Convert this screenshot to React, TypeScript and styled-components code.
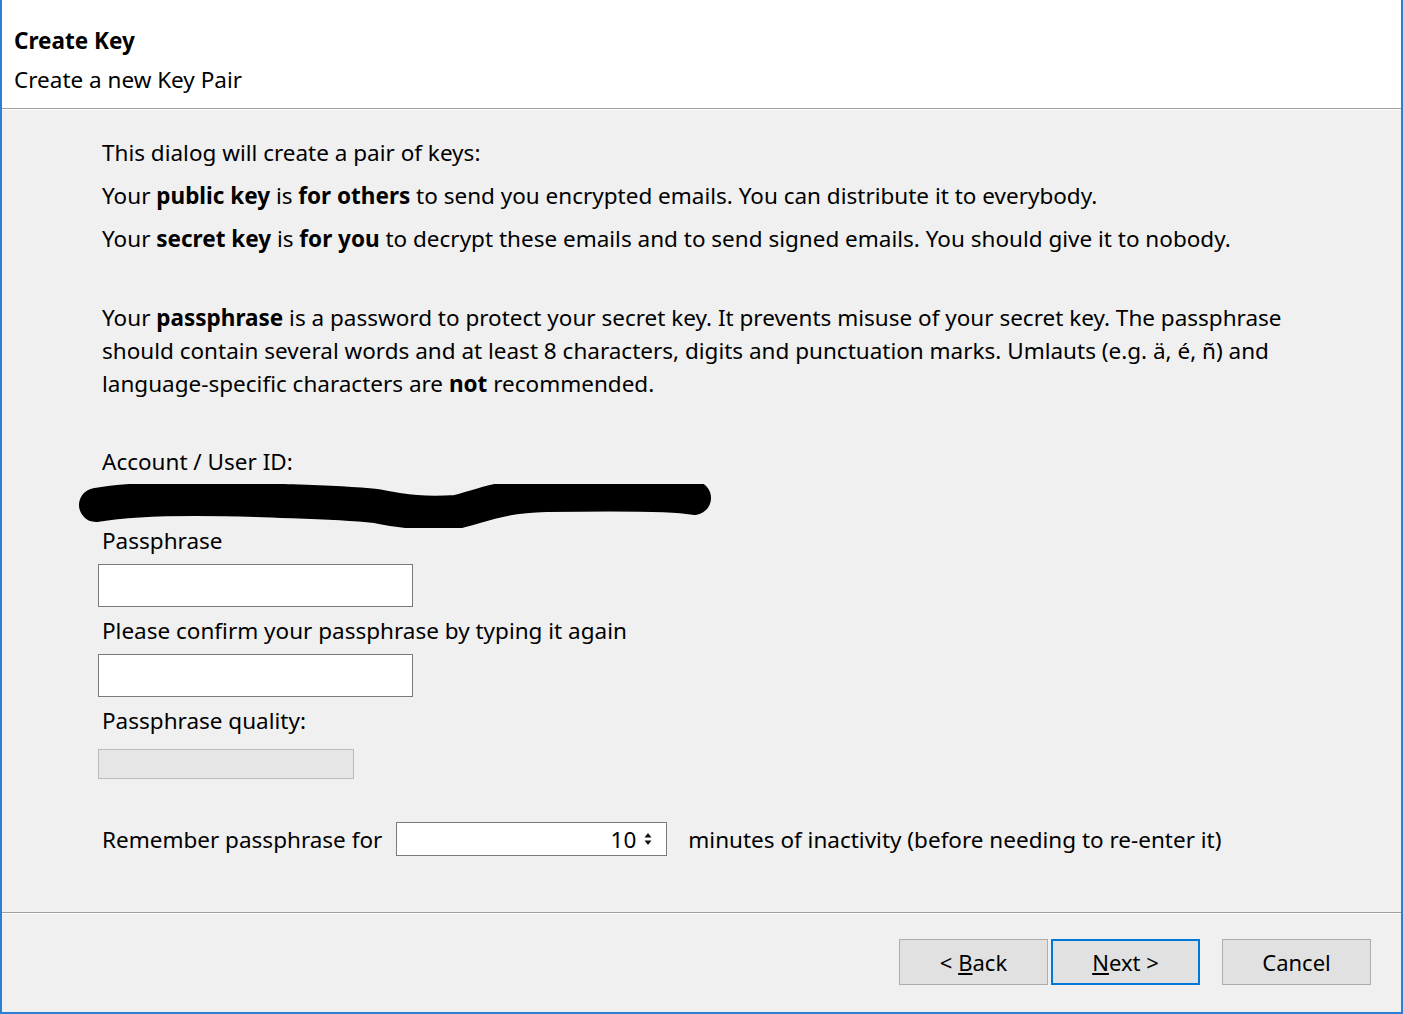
import styled, { createGlobalStyle } from 'styled-components';

const GlobalStyle = createGlobalStyle`
  html, body {
    margin: 0;
    padding: 0;
    background: #f0f0f0;
  }
  body {
    font-family: "Noto Sans", "Open Sans", sans-serif;
    color: #000;
  }
`;

const App = () => {
  return (
    <>
      <GlobalStyle />
      <Window>
        <Header>
          <Title>Create Key</Title>
          <Subtitle>Create a new Key Pair</Subtitle>
        </Header>
        <Body>
          <Line>This dialog will create a pair of keys:</Line>
          <Line>
            Your <b>public key</b> is <b>for others</b> to send you encrypted emails. You can distribute it to everybody.
          </Line>
          <Line>
            Your <b>secret key</b> is <b>for you</b> to decrypt these emails and to send signed emails. You should give it to nobody.
          </Line>
          <Paragraph>
            Your <b>passphrase</b> is a password to protect your secret key. It prevents misuse of your secret key. The passphrase
            <br />
            should contain several words and at least 8 characters, digits and punctuation marks. Umlauts (e.g. ä, é, ñ) and
            <br />
            language-specific characters are <b>not</b> recommended.
          </Paragraph>
          <Label $top={45}>Account / User ID:</Label>
          <Redacted viewBox="0 0 640 44" preserveAspectRatio="none">
            <path
              d="M20 21 C 60 14, 120 14, 180 16 C 230 18, 260 18, 300 22 C 330 28, 350 30, 380 28 C 405 22, 425 12, 470 11 C 540 10, 600 10, 618 14"
              stroke="#000"
              strokeWidth="34"
              strokeLinecap="round"
              fill="none"
            />
          </Redacted>
          <Label $top={-4}>Passphrase</Label>
          <TextField type="password" />
          <Label $top={7}>Please confirm your passphrase by typing it again</Label>
          <TextField type="password" />
          <Label $top={7}>Passphrase quality:</Label>
          <QualityBar />
          <RememberRow>
            <span>Remember passphrase for</span>
            <SpinBox>
              <SpinValue>10</SpinValue>
              <SpinArrows>
                <svg width="8" height="14" viewBox="0 0 8 14">
                  <path d="M4 1 L7.5 5.5 L0.5 5.5 Z" fill="#111" />
                  <path d="M0.5 8.5 L7.5 8.5 L4 13 Z" fill="#111" />
                </svg>
              </SpinArrows>
            </SpinBox>
            <span>minutes of inactivity (before needing to re-enter it)</span>
          </RememberRow>
        </Body>
        <Footer>
          <Button>
            &lt; <u>B</u>ack
          </Button>
          <Button $primary>
            <u>N</u>ext &gt;
          </Button>
          <Button $gap>Cancel</Button>
        </Footer>
      </Window>
    </>
  );
};

export default App;

const Window = styled.div`
  box-sizing: border-box;
  width: 1403px;
  height: 1014px;
  display: flex;
  flex-direction: column;
  border-left: 2px solid #2b7fd4;
  border-right: 2px solid #2b7fd4;
  border-bottom: 2px solid #2b7fd4;
  background: #f0f0f0;
`;

const Header = styled.div`
  height: 109px;
  flex-shrink: 0;
  box-sizing: border-box;
  background: #fff;
  padding: 24px 0 0 12px;
  border-bottom: 1px solid #a0a0a0;
  box-shadow: 0 1px 0 #fff;
`;

const Title = styled.div`
  font-size: 22.5px;
  font-weight: 700;
  line-height: 34px;
`;

const Subtitle = styled.div`
  font-size: 22.5px;
  line-height: 44px;
`;

const Body = styled.div`
  flex: 1;
  padding: 22px 0 0 100px;
  font-size: 22.5px;
  display: flex;
  flex-direction: column;
  align-items: flex-start;
`;

const Line = styled.div`
  line-height: 43px;
  white-space: nowrap;
`;

const Paragraph = styled.div`
  margin-top: 41px;
  line-height: 33px;
  white-space: nowrap;
`;

const Label = styled.div<{ $top: number }>`
  margin-top: ${(p) => p.$top}px;
  line-height: 33px;
`;

const Redacted = styled.svg`
  width: 640px;
  height: 44px;
  margin-left: -26px;
  margin-top: 6px;
  display: block;
`;

const TextField = styled.input`
  box-sizing: border-box;
  width: 315px;
  height: 43px;
  margin: 7px 0 0 -4px;
  border: 1px solid #7a7a7a;
  background: #fff;
  outline: none;
`;

const QualityBar = styled.div`
  box-sizing: border-box;
  width: 256px;
  height: 30px;
  margin: 12px 0 0 -4px;
  border: 1px solid #bcbcbc;
  background: #e6e6e6;
`;

const RememberRow = styled.div`
  display: flex;
  align-items: center;
  margin-top: 43px;
  line-height: 33px;
  white-space: nowrap;

  & > span:first-child {
    margin-right: 14px;
  }

  & > span:last-child {
    margin-left: 21px;
  }
`;

const SpinBox = styled.div`
  box-sizing: border-box;
  width: 271px;
  height: 34px;
  border: 1px solid #7a7a7a;
  background: #fff;
  display: flex;
  align-items: center;
  justify-content: flex-end;
  padding-right: 14px;
  gap: 8px;
`;

const SpinValue = styled.span`
  font-size: 22.5px;
`;

const SpinArrows = styled.span`
  display: flex;
  align-items: center;
`;

const Footer = styled.div`
  height: 100px;
  flex-shrink: 0;
  box-sizing: border-box;
  border-top: 1px solid #a0a0a0;
  box-shadow: inset 0 1px 0 #fff;
  display: flex;
  justify-content: flex-end;
  align-items: flex-start;
  padding: 26px 30px 0 0;
`;

const Button = styled.button<{ $primary?: boolean; $gap?: boolean }>`
  box-sizing: border-box;
  width: 149px;
  height: 46px;
  margin-left: ${(p) => (p.$gap ? '22px' : '3px')};
  background: #e1e1e1;
  border: ${(p) => (p.$primary ? '2px solid #0078d7' : '1px solid #adadad')};
  font-family: "Noto Sans", "Open Sans", sans-serif;
  font-size: 22px;
  color: #000;
  padding: 0;
  cursor: pointer;
`;
